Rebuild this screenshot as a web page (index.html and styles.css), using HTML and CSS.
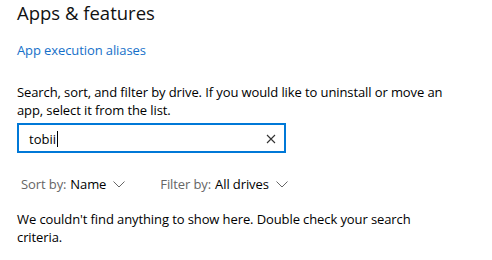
FILE: index.html
```html
<!DOCTYPE html>
<html>
<head>
<meta charset="utf-8">
<link rel="stylesheet" href="styles.css">
</head>
<body>
<main class="page">
  <h1 class="title">Apps &amp; features</h1>
  <a class="link" href="#">App execution aliases</a>
  <p class="desc">Search, sort, and filter by drive. If you would like to uninstall or move an app, select it from the list.</p>
  <div class="search">
    <span class="search-text">tobii<span class="caret"></span></span>
    <svg class="clear" width="10" height="10" viewBox="0 0 10 10"><path d="M1 1 L9 9 M9 1 L1 9" stroke="#333" stroke-width="1.1" fill="none"/></svg>
  </div>
  <div class="filters">
    <div class="dropdown"><span class="label">Sort by:</span><span class="value">Name</span>
      <svg class="chev" width="12" height="7" viewBox="0 0 12 7"><path d="M0.5 0.5 L6 6 L11.5 0.5" stroke="#666" stroke-width="1" fill="none"/></svg></div>
    <div class="dropdown"><span class="label">Filter by:</span><span class="value">All drives</span>
      <svg class="chev" width="12" height="7" viewBox="0 0 12 7"><path d="M0.5 0.5 L6 6 L11.5 0.5" stroke="#666" stroke-width="1" fill="none"/></svg></div>
  </div>
  <p class="empty">We couldn't find anything to show here. Double check your search criteria.</p>
</main>
</body>
</html>
```
FILE: styles.css
```css
html, body { margin: 0; padding: 0; background: #fff; }
body { font-family: "Open Sans", "Noto Sans", sans-serif; color: #000; }
.page { padding: 0 40px 0 17px; width: 435px; }
.title { font-size: 18.5px; font-weight: 400; margin: 0; line-height: 25px; letter-spacing: 0; color: #111; }
.link { display: block; margin-top: 16px; font-size: 13px; line-height: 18px; color: #1570c9; text-decoration: none; letter-spacing: -0.1px; }
.desc { margin: 24px 0 0; font-size: 13px; line-height: 18px; letter-spacing: -0.1px; }
.search { margin-top: 4px; box-sizing: border-box; width: 269px; height: 30px; border: 2px solid #0078d7; display: flex; align-items: center; padding: 2px 8px 0 10px; justify-content: space-between; }
.search-text { font-size: 13px; display: flex; align-items: center; }
.caret { display: inline-block; width: 1px; height: 16px; background: #000; margin-left: 1px; }
.filters { display: flex; gap: 35px; margin-top: 22px; padding-left: 4px; font-size: 13px; line-height: 18px; letter-spacing: -0.1px; }
.dropdown { display: flex; align-items: center; }
.label { color: #666; }
.value { margin-left: 4px; }
.chev { margin-left: 7px; }
.empty { margin: 17px 0 0; font-size: 13px; line-height: 18px; letter-spacing: -0.1px; }
```
